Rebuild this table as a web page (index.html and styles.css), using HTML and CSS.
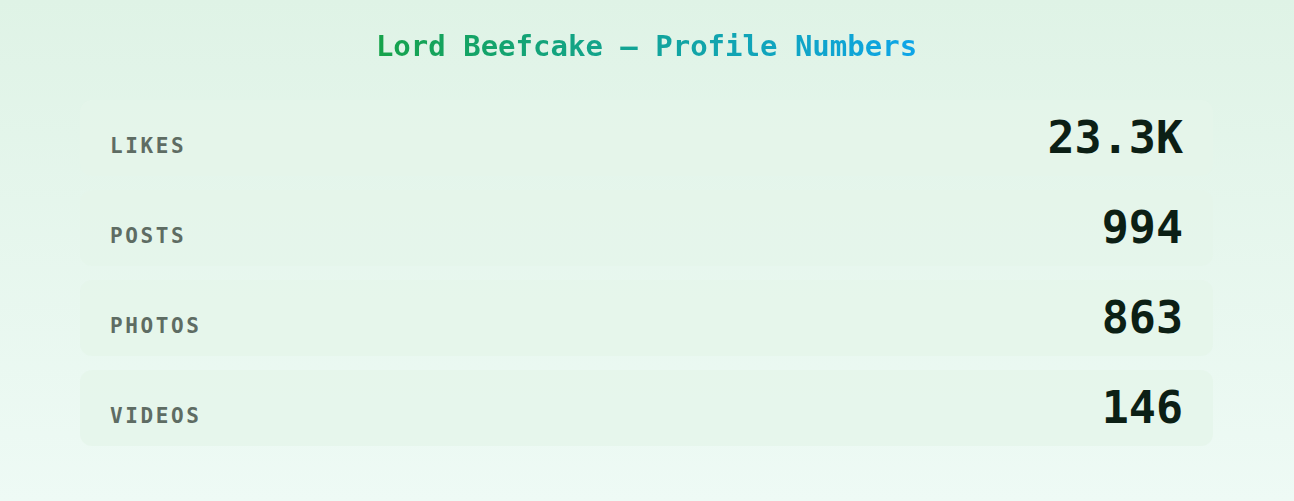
FILE: index.html
```html
<!DOCTYPE html>
<html lang="en">
<head>
    <meta charset="UTF-8">
    <meta name="viewport" content="width=device-width, initial-scale=1.0">
    <title>Lord Beefcake - Profile Numbers</title>
    <link rel="stylesheet" href="styles.css">
</head>
<body>
    <div class="page">
        <h1 class="title"><span>Lord Beefcake — Profile Numbers</span></h1>

        <div class="stats">
            <div class="stat-row">
                <span class="stat-label">Likes</span>
                <span class="stat-value">23.3K</span>
            </div>
            <div class="stat-row">
                <span class="stat-label">Posts</span>
                <span class="stat-value">994</span>
            </div>
            <div class="stat-row">
                <span class="stat-label">Photos</span>
                <span class="stat-value">863</span>
            </div>
            <div class="stat-row">
                <span class="stat-label">Videos</span>
                <span class="stat-value">146</span>
            </div>
        </div>
    </div>
</body>
</html>
```

FILE: styles.css
```css
html, body {
    height: 100%;
}
body {
    margin: 0;
    font-family: "DejaVu Sans Mono", "Liberation Mono", monospace;
    background: linear-gradient(180deg, #dff3e6 0%, #eefaf5 100%);
}
.page {
    padding: 29px 81px 0 80px;
}
.title {
    margin: 0 0 37px;
    text-align: center;
    font-size: 29px;
    font-weight: bold;
}
.title span {
    background: linear-gradient(90deg, #16a34a 0%, #0ea5e9 100%);
    -webkit-background-clip: text;
    background-clip: text;
    color: transparent;
}
.stats {
    display: flex;
    flex-direction: column;
    gap: 14px;
}
.stat-row {
    display: flex;
    justify-content: space-between;
    align-items: baseline;
    padding: 11px 30px 12px 30px;
    background: rgba(229, 245, 234, 0.8);
    border-radius: 12px;
}
.stat-label {
    font-size: 21px;
    font-weight: bold;
    letter-spacing: 2.6px;
    text-transform: uppercase;
    color: #5e6c63;
}
.stat-value {
    font-size: 45px;
    font-weight: bold;
    color: #0c1f15;
}
```
